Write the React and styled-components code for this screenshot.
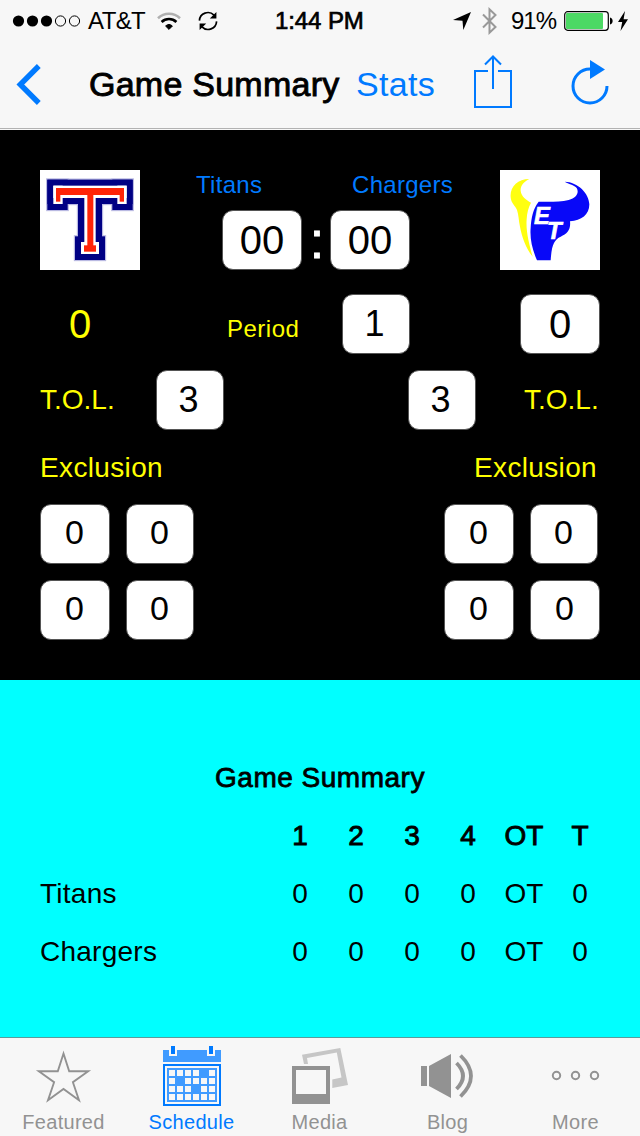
import React from 'react';
import styled, { createGlobalStyle } from 'styled-components';

const BLUE = '#007aff';
const GREY = '#929292';

const GlobalStyle = createGlobalStyle`
  * { box-sizing: border-box; }
  body { margin: 0; background: #f7f7f7; }
  svg { display: block; flex: none; }
`;

const Screen = styled.div`
  width: 640px;
  height: 1136px;
  display: flex;
  flex-direction: column;
  overflow: hidden;
  color: #000;
  white-space: nowrap;
  font-family: 'Liberation Sans', Arial, sans-serif;
`;

const Header = styled.header`
  height: 129px;
  flex: none;
  margin-bottom: 1px;
  background: #f7f7f7;
  border-bottom: 1px solid #b2b2b2;
`;

const StatusBar = styled.div`
  display: grid;
  grid-template-columns: 276px 1fr auto;
  height: 40px;
  padding: 0 12px;
  font-size: 24px;
  line-height: 42px;
`;

const StatusGroup = styled.div`
  display: flex;
  align-items: center;
`;

const Carrier = styled.span`
  margin: 0 12px 0 8px;
  letter-spacing: -0.6px;
`;

const Clock = styled.span`
  margin-left: -13px;
  letter-spacing: -0.1px;
  -webkit-text-stroke: 0.7px #000;
`;

const Percent = styled.span`
  margin: 0 8px 0 12px;
  letter-spacing: -1px;
`;

const IconSlot = styled.span`
  margin-left: ${(p) => p.$gap}px;
`;

const NavBar = styled.nav`
  display: flex;
  align-items: center;
  height: 88px;
  padding-left: 16px;
  font-size: 34px;
  line-height: 88px;
`;

const Title = styled.h1`
  width: 267px;
  margin: 0 0 0 46px;
  font-size: 34px;
  font-weight: 400;
  letter-spacing: 0.25px;
  -webkit-text-stroke: 0.9px #000;
`;

const NavLink = styled.a`
  width: 117px;
  color: ${BLUE};
  letter-spacing: 0.3px;
`;

const NavAction = styled.span`
  margin-left: ${(p) => p.$gap || 0}px;
  padding-bottom: 4px;
`;

const Scoreboard = styled.section`
  height: 550px;
  flex: none;
  padding: 40px 40px 0;
  background: #000;
  color: #ff0;
`;

const TeamsRow = styled.div`
  display: grid;
  grid-template-columns: 100px 1fr 100px;
  height: 100px;
`;

const TeamNames = styled.div`
  display: grid;
  grid-template-columns: 156px auto;
  height: 40px;
  padding-left: 56px;
  color: ${BLUE};
  font-size: 24px;
  line-height: 30px;
  letter-spacing: 0.3px;
`;

const GameClock = styled.div`
  display: flex;
  padding-left: 82px;
`;

const Colon = styled.span`
  width: 28px;
  padding-left: 2px;
  color: #fff;
  text-align: center;
  font-size: 50px;
  line-height: 63px;
  -webkit-text-stroke: 1px #fff;
`;

const NumberBox = styled.div`
  width: ${(p) => p.$width || 68}px;
  height: 60px;
  padding: 0 ${(p) => p.$inset ?? 3}px ${(p) => p.$lift || 0}px 0;
  display: flex;
  align-items: center;
  justify-content: center;
  border: 1px solid #555;
  border-radius: 11px;
  background: #fff;
  color: #000;
  font-size: ${(p) => p.$size || 36}px;
  line-height: 1;
`;

const PeriodRow = styled.div`
  display: grid;
  grid-template-columns: 80px 107px 115px 68px auto;
  height: 60px;
  margin-top: 24px;

  > :last-child { justify-self: end; }
`;

const Score = styled.span`
  text-align: center;
  font-size: 40px;
  line-height: 60px;
`;

const PeriodLabel = styled.span`
  grid-column: 3;
  font-size: 24px;
  line-height: 69px;
  letter-spacing: 0.5px;
`;

const TimeoutRow = styled.div`
  display: grid;
  grid-template-columns: 116px 68px 184px 116px 76px;
  height: 60px;
  margin-top: 16px;
`;

const TimeoutLabel = styled.span`
  font-size: 28px;
  line-height: 59px;
`;

const ExclusionRow = styled.div`
  display: flex;
  justify-content: space-between;
  margin-top: 18px;
`;

const ExclusionTitle = styled.div`
  padding-left: ${(p) => p.$indent || 0}px;
  font-size: 28px;
  line-height: 40px;
  letter-spacing: 0.35px;
`;

const ExclusionGrid = styled.div`
  display: grid;
  grid-template-columns: 70px 70px;
  gap: 16px;
  margin-top: 16px;
`;

const Summary = styled.section`
  height: 357px;
  flex: none;
  padding: 69px 32px 0 40px;
  background: #0ff;
  font-size: 28px;
  line-height: 58px;
`;

const SummaryTitle = styled.h2`
  margin: 0;
  font-size: 28px;
  font-weight: 400;
  text-align: center;
  letter-spacing: 0.5px;
  padding-right: 8px;
  -webkit-text-stroke: 0.8px #000;
`;

const SummaryRow = styled.div`
  display: grid;
  grid-template-columns: 1fr repeat(6, 56px);
  height: 58px;
  text-align: center;
  -webkit-text-stroke: ${(p) => (p.$head ? '0.9px #000' : '0')};
`;

const TeamCell = styled.span`
  text-align: left;
  letter-spacing: 0.25px;
`;

const TabBar = styled.footer`
  display: grid;
  grid-template-columns: repeat(5, 128px);
  height: 99px;
  flex: none;
  border-top: 1px solid #5a9c9c;
  background: #f7f7f7;
`;

const Tab = styled.a`
  display: flex;
  flex-direction: column;
  align-items: center;
  padding: 7px 1px 0 0;
  color: ${(p) => (p.$active ? BLUE : GREY)};
  font-size: 20px;
  line-height: 30px;
  letter-spacing: 0.3px;
`;

const SignalDots = () => (
  <svg width="68" height="14" viewBox="0 0 68 14">
    {[0, 1, 2, 3, 4].map((i) => (
      <circle key={i} cx={6.5 + i * 14} cy="7" r={i < 3 ? 5.6 : 5.1}
        fill={i < 3 ? '#000' : 'none'} stroke={i < 3 ? 'none' : '#000'} />
    ))}
  </svg>
);

const Wifi = () => (
  <svg width="24" height="18" viewBox="0 0 24 18" fill="none" strokeWidth="2.6">
    <path d="M1 6.2a16 16 0 0 1 22 0" stroke="#b0b0b0" />
    <path d="M4.6 10a10.7 10.7 0 0 1 14.8 0" stroke="#000" />
    <path d="M8.6 14a5 5 0 0 1 6.8 0L12 17.4z" fill="#000" stroke="#000" strokeWidth="1" />
  </svg>
);

const Sync = () => (
  <svg width="20" height="20" viewBox="0 0 20 20" fill="none" stroke="#000" strokeWidth="1.7">
    <path d="M1.4 9.6A8.5 8.5 0 0 1 16 4.2M18.6 10.4A8.5 8.5 0 0 1 4 15.8" />
    <path d="M18.4 1v6.6h-6.6zM1.6 19v-6.6h6.6z" fill="#000" stroke="none" />
  </svg>
);

const LocationArrow = () => (
  <svg width="18" height="18" viewBox="0 0 18 18"><path d="M18 0 10.3 18l-.8-9.2L0 7.9z" /></svg>
);

const Bluetooth = () => (
  <svg width="18" height="28" viewBox="0 0 18 28" fill="none" stroke="#999" strokeWidth="2">
    <path d="m2 7.5 12.5 12.5-6 5.7V2.3l6 5.7L2 20.5" />
  </svg>
);

const Battery = () => (
  <svg width="49" height="20" viewBox="0 0 49 20">
    <rect x=".7" y=".7" width="43.6" height="18.6" rx="3" fill="#fff" stroke="#000" strokeWidth="1.2" />
    <rect x="2" y="2" width="37" height="16" rx="1" fill="#4cd964" />
    <path d="M46 6.5c3.5.5 3.5 6.5 0 7z" />
  </svg>
);

const Bolt = () => (
  <svg width="10" height="20" viewBox="0 0 10 20"><path d="M7 0 0 11h4.2L2.5 20 10 8.3H5.6z" /></svg>
);

const BackChevron = () => (
  <svg width="27" height="42" viewBox="0 0 27 42" fill="none" stroke={BLUE} strokeWidth="5.4">
    <path d="M22.8 3 4.300 21.500 22.800 40" />
  </svg>
);

const Share = () => (
  <svg width="40" height="54" viewBox="0 0 40 54" fill="none" stroke={BLUE} strokeWidth="2">
    <path d="M15 16H2v36h36V16H25M20 34V2M12 9.5l8-8 8 8" />
  </svg>
);

const Reload = () => (
  <svg width="38" height="46" viewBox="0 0 38 46" fill="none" stroke={BLUE} strokeWidth="3">
    <path d="M19 10a17 17 0 1 0 17 17" />
    <path d="m19 1 15 9.5-15 9.5z" fill={BLUE} stroke="none" />
  </svg>
);

const TitansShape = ({ grow, fill }) => (
  <g fill={fill} stroke={fill} strokeWidth={grow}>
    <rect x="52" y="59" width="256" height="73" />
    <rect x="52" y="59" width="61" height="91" />
    <rect x="247" y="59" width="61" height="91" />
    <rect x="144" y="100" width="72" height="140" />
    <rect x="135" y="229" width="90" height="71" />
  </g>
);

const TitansLogo = () => (
  <svg width="100" height="100" viewBox="30 30 300 300">
    <rect x="30" y="30" width="300" height="300" fill="#fff" />
    <TitansShape grow="7" fill="#b9b9e2" />
    <TitansShape grow="0" fill="#000084" />
    <g fill="#fff">
      <rect x="70" y="77" width="220" height="37" />
      <rect x="70" y="77" width="28" height="55" />
      <rect x="262" y="77" width="28" height="55" />
      <rect x="163" y="100" width="34" height="160" />
      <rect x="153" y="246" width="54" height="36" />
    </g>
    <g fill="#ff2408">
      <rect x="78" y="84" width="204" height="21" />
      <rect x="78" y="84" width="13" height="41" />
      <rect x="269" y="84" width="13" height="41" />
      <rect x="172" y="95" width="18" height="170" />
      <rect x="162" y="256" width="36" height="19" />
    </g>
  </svg>
);

const ChargersLogo = () => (
  <svg width="100" height="100" viewBox="30 30 300 300">
    <rect x="30" y="30" width="300" height="300" fill="#fff" />
    <path fill="#ffff10" d="M118 57C82 57 59 82 62 112c1 18 14 26 19 38 5 14 5 32 9 50 6 34 19 66 38 90-10-36-21-77-18-112 1-19 5-36 13-50-14-8-29-18-31-36-1-14 9-27 26-35z" />
    <path fill="#0808f8" d="M224 65c40 1 73 35 74 68 0 32-24 48-58 51 3 24-8 38-28 46-20 9-27 25-30 71h-41c-14-32-22-66-19-98 2-30 7-56 24-78 30 1 64 1 90-5 24-6 32-22 24-36-7-9-21-11-36-19z" />
    <text x="132 171" y="192 236" fill="#fff" stroke="#fff" strokeWidth="2"
      fontFamily="Liberation Sans, Arial, sans-serif" fontSize="71" fontWeight="700" fontStyle="italic">ET</text>
  </svg>
);

const TabIcon = (props) => <svg width="60" height="62" viewBox="0 0 60 62" {...props} />;

const Star = () => (
  <TabIcon fill="none" stroke={GREY} strokeWidth="1.9">
    <path d="m29.500 8.500 5.700 17.700h19L38.900 37.200 45 55.200 29.500 44 14 55.200 20.100 37.200 4.800 26.200h19z" />
  </TabIcon>
);

const FILLED_DAYS = ['0-4', '1-1', '2-3'];

const Calendar = () => (
  <TabIcon>
    <path fill="#409bff" d="M1 5h58v12H1z" />
    <path fill="#f7f7f7" d="M7 1h8v10H7zM45 1h8v10h-8z" />
    <path fill={BLUE} d="M9 1h4v8H9zM47 1h4v8h-4z" />
    <rect x="2" y="20" width="56" height="40" fill="#f7f7f7" stroke={BLUE} strokeWidth="2" />
    <rect x="5" y="23" width="50" height="34" fill="#409bff" />
    {[0, 1, 2, 3].flatMap((row) => [0, 1, 2, 3, 4, 5]
      .filter((col) => !FILLED_DAYS.includes(`${row}-${col}`))
      .map((col) => (
        <rect key={`${row}-${col}`} x={7 + col * 8} y={25 + row * 8} width="6" height="6" fill="#f7f7f7" />
      )))}
  </TabIcon>
);

const Photos = () => (
  <TabIcon>
    <path fill="#c6c6c6" d="M12 9.7 50.3 3 58 40l-15.7 3v-8.5l9.2-2-4.7-25L17 13l1 6h-4z" />
    <path fill={GREY} fillRule="evenodd" d="M2 21h38v38H2zm4 4v24h30V25z" />
  </TabIcon>
);

const Speaker = () => (
  <TabIcon fill={GREY}>
    <path d="M3 21h6v20H3zM11 21 33 9v44L11 41z" />
    <path d="M38.5 18q13 13 0 26M42.5 10.5q21 20.5 0 41" fill="none" stroke={GREY} strokeWidth="3.8" />
  </TabIcon>
);

const MoreDots = () => (
  <TabIcon fill="none" stroke={GREY} strokeWidth="2">
    {[10.5, 29.5, 48.5].map((cx) => <circle key={cx} cx={cx} cy="30.5" r="3.7" />)}
  </TabIcon>
);

const TABS = [
  { label: 'Featured', Icon: Star },
  { label: 'Schedule', Icon: Calendar, active: true },
  { label: 'Media', Icon: Photos },
  { label: 'Blog', Icon: Speaker },
  { label: 'More', Icon: MoreDots },
];

const RESULTS = [
  { team: 'Titans', cells: ['0', '0', '0', '0', 'OT', '0'] },
  { team: 'Chargers', cells: ['0', '0', '0', '0', 'OT', '0'] },
];

const Exclusions = ({ indent, widths }) => (
  <div>
    <ExclusionTitle $indent={indent}>Exclusion</ExclusionTitle>
    <ExclusionGrid>
      {widths.map((width, i) => (
        <NumberBox key={i} $width={width} $size={34} $lift={4} $inset={1}>0</NumberBox>
      ))}
    </ExclusionGrid>
  </div>
);

export default function App() {
  return (
    <Screen>
      <GlobalStyle />
      <Header>
        <StatusBar>
          <StatusGroup>
            <SignalDots />
            <Carrier>AT&amp;T</Carrier>
            <Wifi />
            <IconSlot $gap={17}><Sync /></IconSlot>
          </StatusGroup>
          <StatusGroup><Clock>1:44 PM</Clock></StatusGroup>
          <StatusGroup>
            <LocationArrow />
            <IconSlot $gap={10}><Bluetooth /></IconSlot>
            <Percent>91%</Percent>
            <Battery />
            <IconSlot $gap={5}><Bolt /></IconSlot>
          </StatusGroup>
        </StatusBar>
        <NavBar>
          <BackChevron />
          <Title>Game Summary</Title>
          <NavLink>Stats</NavLink>
          <NavAction><Share /></NavAction>
          <NavAction $gap={58}><Reload /></NavAction>
        </NavBar>
      </Header>

      <Scoreboard>
        <TeamsRow>
          <TitansLogo />
          <div>
            <TeamNames><span>Titans</span><span>Chargers</span></TeamNames>
            <GameClock>
              <NumberBox $width={80} $size={40} $inset={0}>00</NumberBox>
              <Colon>:</Colon>
              <NumberBox $width={80} $size={40} $inset={0}>00</NumberBox>
            </GameClock>
          </div>
          <ChargersLogo />
        </TeamsRow>
        <PeriodRow>
          <Score>0</Score>
          <PeriodLabel>Period</PeriodLabel>
          <NumberBox>1</NumberBox>
          <NumberBox $width={80} $size={40} $inset={0}>0</NumberBox>
        </PeriodRow>
        <TimeoutRow>
          <TimeoutLabel>T.O.L.</TimeoutLabel>
          <NumberBox>3</NumberBox>
          <span />
          <NumberBox>3</NumberBox>
          <TimeoutLabel>T.O.L.</TimeoutLabel>
        </TimeoutRow>
        <ExclusionRow>
          <Exclusions widths={[70, 68, 70, 68]} />
          <Exclusions indent={30} widths={[70, 68, 70, 70]} />
        </ExclusionRow>
      </Scoreboard>

      <Summary>
        <SummaryTitle>Game Summary</SummaryTitle>
        <SummaryRow $head>
          <span />
          {['1', '2', '3', '4', 'OT', 'T'].map((h) => <span key={h}>{h}</span>)}
        </SummaryRow>
        {RESULTS.map(({ team, cells }) => (
          <SummaryRow key={team}>
            <TeamCell>{team}</TeamCell>
            {cells.map((c, i) => <span key={i}>{c}</span>)}
          </SummaryRow>
        ))}
      </Summary>

      <TabBar>
        {TABS.map(({ label, Icon, active }) => (
          <Tab key={label} $active={active}>
            <Icon />
            {label}
          </Tab>
        ))}
      </TabBar>
    </Screen>
  );
}
